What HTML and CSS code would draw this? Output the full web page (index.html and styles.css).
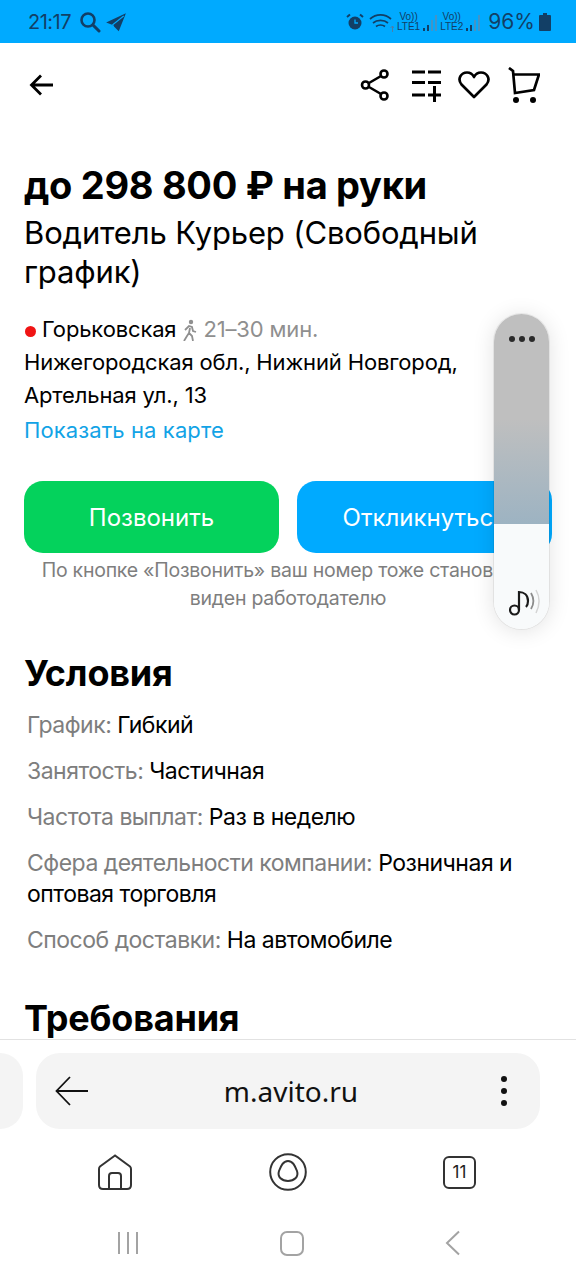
FILE: index.html
```html
<!DOCTYPE html>
<html lang="ru">
<head>
<meta charset="UTF-8">
<title>Водитель Курьер</title>
<link rel="stylesheet" href="styles.css">
</head>
<body>
<div id="wrapper">
	<div class="status-bar">
		<div class="status-left">
			<span class="status-time">21:17</span>
			<svg class="ic-search" width="22" height="22" viewBox="0 0 22 22"><circle cx="9" cy="9" r="6.500" fill="none" stroke="#123f66" stroke-width="2.600"/><path d="M14 14l6 6" stroke="#123f66" stroke-width="3" stroke-linecap="round"/></svg>
			<svg class="ic-tg" width="22" height="22" viewBox="0 0 20 20"><path d="M19 2L1 10.500l5.500 2 1 1 5 5z" fill="#123f66"/><path d="M17 4.500L7 12.500l1 3" fill="none" stroke="#00aaff" stroke-width="1"/></svg>
		</div>
		<div class="status-right">
			<svg width="18" height="18" viewBox="0 0 18 18"><circle cx="9" cy="10" r="6.500" fill="#123f66"/><path d="M9 6.500V10h3" fill="none" stroke="#00aaff" stroke-width="1.300"/><path d="M1 4l3-2.500M17 4l-3-2.500" stroke="#123f66" stroke-width="2"/></svg>
			<svg class="ic-wifi" width="25" height="22" viewBox="0 0 25 22"><path d="M1 8c6-5.500 15-5.500 21 0M4 12c4-3.500 11-3.500 15 0M7 15.500c2.500-2 6.500-2 9 0" fill="none" stroke="#123f66" stroke-width="1.700"/><path d="M23.500 21v-6M21.500 17l2-2 1.500 2" fill="none" stroke="#4d7ea6" stroke-width="1"/></svg>
			<span class="sim"><span>Vo))</span><span>LTE1</span></span>
			<svg width="15" height="20" viewBox="0 0 15 20"><path d="M2 19v-3M6 19v-6" stroke="#123f66" stroke-width="2"/><path d="M10 19V8M14 19V3" stroke="#5a8db5" stroke-width="1.500"/></svg>
			<span class="sim"><span>Vo))</span><span>LTE2</span></span>
			<svg width="15" height="20" viewBox="0 0 15 20"><path d="M2 19v-3M6 19v-6" stroke="#123f66" stroke-width="2"/><path d="M10 19V8M14 19V3" stroke="#5a8db5" stroke-width="1.500"/></svg>
			<span class="status-pct">96%</span>
			<svg width="12" height="18" viewBox="0 0 12 18"><path d="M4 0h4v2h3a1 1 0 011 1v14a1 1 0 01-1 1H1a1 1 0 01-1-1V3a1 1 0 011-1h3z" fill="#123f66"/></svg>
		</div>
	</div>

	<div class="content">
		<div class="top-nav">
			<svg width="28" height="28" viewBox="0 0 28 28"><path d="M25 14H4M13 4.500L3.500 14l9.500 9.500" fill="none" stroke="#000" stroke-width="2.800"/></svg>
			<div class="top-actions">
				<svg class="act-share" width="30" height="34" viewBox="0 0 30 34"><g fill="none" stroke="#000" stroke-width="2.600"><circle cx="5.500" cy="17" r="3.500"/><circle cx="24" cy="6" r="3.500"/><circle cx="24" cy="28" r="3.500"/><path d="M9 15L21 8M9 19l12 7"/></g></svg>
				<svg class="act-compare" width="30" height="33" viewBox="0 0 30 33"><path d="M0 3h13M16 3h13M0 13.500h13M16 13.500h13M0 26h13M16 26h13M22.500 17v16" fill="none" stroke="#000" stroke-width="3"/></svg>
				<svg class="act-heart" width="32" height="30" viewBox="0 0 32 30"><path d="M16 27L3.500 14.500C-1 9 3 2.500 9 2.500c3 0 5.500 1.500 7 4.500 1.500-3 4-4.500 7-4.500 6 0 10 6.500 5.500 12z" fill="none" stroke="#000" stroke-width="2.700" stroke-linejoin="round"/></svg>
				<svg class="act-cart" width="32" height="37" viewBox="0 0 32 37"><path d="M1 1l4 3 2 22 19-3 5-15.500H5.500" fill="none" stroke="#000" stroke-width="2.700"/><circle cx="8" cy="33" r="3" fill="#000"/><circle cx="25" cy="33" r="3" fill="#000"/></svg>
			</div>
		</div>

		<h1 class="price">до 298 800 ₽ на руки</h1>
		<h2 class="job-title">Водитель Курьер (Свободный график)</h2>

		<div class="address">
			<div class="metro">
				<span class="metro-dot"></span>
				<span>Горьковская</span>
				<svg width="16" height="22" viewBox="0 0 16 22"><circle cx="9" cy="3" r="2.200" fill="#8f8f8f"/><path d="M3 11l4-4 3 1 1 4 3 1M8 9l-1 5 3 3 1 5M7 14l-2 3-3 5" fill="none" stroke="#8f8f8f" stroke-width="1.800"/></svg>
				<span class="metro-time">21–30 мин.</span>
			</div>
			<div>Нижегородская обл., Нижний Новгород,</div>
			<div>Артельная ул., 13</div>
			<a class="map-link">Показать на карте</a>
		</div>

		<div class="buttons">
			<div class="btn btn-call">Позвонить</div>
			<div class="btn btn-reply">Откликнуться</div>
		</div>
		<p class="btn-note">По кнопке «Позвонить» ваш номер тоже становится<br>виден работодателю</p>

		<h3 class="section-title">Условия</h3>
		<ul class="params">
			<li><span>График:</span> Гибкий</li>
			<li><span>Занятость:</span> Частичная</li>
			<li><span>Частота выплат:</span> Раз в неделю</li>
			<li><span>Сфера деятельности компании:</span> Розничная и оптовая торговля</li>
			<li><span>Способ доставки:</span> На автомобиле</li>
		</ul>
		<h3 class="section-title section-req">Требования</h3>
	</div>

	<div class="browser-bar">
		<div class="url-row">
			<div class="prev-tab"></div>
			<div class="url-box">
				<svg width="34" height="30" viewBox="0 0 34 30"><path d="M33 15H2M15 1L1.500 15 15 29" fill="none" stroke="#111" stroke-width="1.800"/></svg>
				<span class="url-text">m.avito.ru</span>
				<svg width="8" height="32" viewBox="0 0 8 32"><circle cx="4" cy="4" r="3" fill="#111"/><circle cx="4" cy="16" r="3" fill="#111"/><circle cx="4" cy="28" r="3" fill="#111"/></svg>
			</div>
		</div>
		<div class="browser-tabs">
			<svg width="34" height="36" viewBox="0 0 34 36"><path d="M17 1.500L2 12.500c-.7.600-1 1.300-1 2.500v16c0 2.500 1.500 4 4 4h24c2.500 0 4-1.500 4-4V15c0-1.200-.3-1.900-1-2.500z" fill="none" stroke="#333" stroke-width="2"/><path d="M11 35V22c0-2 1-3 3-3h6c2 0 3 1 3 3v13" fill="none" stroke="#333" stroke-width="2"/></svg>
			<svg width="38" height="38" viewBox="0 0 38 38"><circle cx="19" cy="19" r="17.800" fill="none" stroke="#333" stroke-width="2"/><path d="M19 8c5 0 7 5 9 10 2 6-3 10-9 10S8 24 10 18c2-5 4-10 9-10z" fill="none" stroke="#333" stroke-width="2"/></svg>
			<span class="tab-count">11</span>
		</div>
		<div class="system-nav">
			<svg width="22" height="24" viewBox="0 0 22 24"><path d="M2 1v22M11 1v22M20 1v22" stroke="#a3a3a3" stroke-width="2"/></svg>
			<span class="sys-home"></span>
			<svg width="16" height="26" viewBox="0 0 16 26"><path d="M14 1.500L2 13l12 11.500" fill="none" stroke="#a3a3a3" stroke-width="2"/></svg>
		</div>
	</div>

	<div class="volume">
		<div class="volume-top">
			<span></span><span></span><span></span>
		</div>
		<div class="volume-bottom">
			<svg width="34" height="28" viewBox="0 0 34 28"><circle cx="6.500" cy="21" r="4.500" fill="none" stroke="#1a1a1a" stroke-width="2.200"/><path d="M11 21V3c5 0 9 3 9 9 0 3-1 5-2 6" fill="none" stroke="#1a1a1a" stroke-width="2.200"/><path d="M23 4c3 5 3 11 0 16" fill="none" stroke="#8c8c8c" stroke-width="1.800"/><path d="M28 1c4 7 4 15 0 23" fill="none" stroke="#d4d4d4" stroke-width="1.500"/></svg>
		</div>
	</div>
</div>
</body>
</html>
```

FILE: styles.css
```css
*{
	box-sizing:border-box;
}
html, body{
	margin:0;
	padding:0;
	background:#fff;
}
body{
	font-family:Inter, "Noto Sans", sans-serif;
	color:#000;
}
#wrapper{
	width:576px;
	height:1280px;
	position:relative;
	overflow:hidden;
	display:flex;
	flex-direction:column;
}

/* status bar */
.status-bar{
	height:43px;
	flex:none;
	background:#00aaff;
	color:#123f66;
	display:flex;
	justify-content:space-between;
	align-items:center;
	padding:0 28px;
}
.status-left, .status-right{
	display:flex;
	align-items:center;
}
.status-time{
	font-size:20px;
	font-weight:400;
	letter-spacing:-0.5px;
	margin-right:8px;
}
.ic-search{
	margin-right:4px;
}
.status-right{
	gap:2px;
	margin-right:-3px;
}
.ic-wifi{
	margin-left:3px;
}
.sim{
	display:flex;
	flex-direction:column;
	align-items:center;
	font-size:10px;
	line-height:10px;
	font-family:"Liberation Sans", sans-serif;
	margin-left:1px;
}
.status-pct{
	font-size:21px;
	margin:0 2px 0 6px;
}

/* main content */
.content{
	flex:1;
	overflow:hidden;
	padding:0 24px;
}
.top-nav{
	display:flex;
	justify-content:space-between;
	align-items:center;
	height:84px;
	margin-right:12px;
	margin-left:4px;
}
.top-actions{
	display:flex;
	align-items:center;
	gap:17px;
}
.act-compare{
	margin-left:5px;
}
.act-heart{
	margin-left:-1px;
}
.act-cart{
	margin-left:1px;
}
.price{
	font-size:38px;
	font-weight:700;
	line-height:46px;
	letter-spacing:-0.3px;
	margin:35px 0 0 0;
}
.job-title{
	font-size:31px;
	font-weight:400;
	line-height:39px;
	letter-spacing:-0.15px;
	margin:5px 0 0 0;
	width:480px;
}
.address{
	font-size:22px;
	line-height:33px;
	letter-spacing:-0.15px;
	margin-top:22px;
}
.metro{
	display:flex;
	align-items:center;
	gap:6px;
}
.metro-dot{
	width:11px;
	height:11px;
	border-radius:50%;
	background:#f01414;
	margin:3px 0 0 1px;
}
.metro-time{
	color:#8f8f8f;
	margin-left:-1px;
}
.map-link{
	color:#12a3e6;
	display:block;
	letter-spacing:0.1px;
	margin-top:2px;
}
.buttons{
	display:flex;
	gap:18px;
	margin-top:34px;
}
.btn{
	width:255px;
	height:72px;
	border-radius:19px;
	color:#fff;
	font-size:24px;
	display:flex;
	align-items:center;
	justify-content:center;
	flex:none;
}
.btn-call{
	background:#04d25c;
}
.btn-reply{
	background:#00aaff;
}
.btn-note{
	font-size:19.500px;
	line-height:28px;
	color:#7e7e7e;
	text-align:center;
	letter-spacing:-0.25px;
	margin:3px -24px 0 -24px;
	white-space:nowrap;
}
.section-title{
	font-size:36px;
	font-weight:700;
	line-height:44px;
	letter-spacing:-0.2px;
	margin:39px 0 0 0;
}
.params{
	list-style:none;
	margin:15px 0 0 3px;
	padding:0;
	font-size:23px;
	line-height:31px;
	letter-spacing:-0.5px;
}
.params li{
	margin-bottom:15px;
}
.params span{
	color:#7e7e7e;
}
.section-req{
	margin-top:40px;
}

/* browser bottom bar */
.browser-bar{
	height:241px;
	flex:none;
	background:#fff;
	border-top:1px solid #e2e2e2;
}
.url-row{
	display:flex;
	gap:13px;
	margin-top:13px;
}
.prev-tab{
	width:23px;
	height:76px;
	background:#f4f4f4;
	border-radius:0 24px 24px 0;
}
.url-box{
	width:504px;
	height:76px;
	background:#f4f4f4;
	border-radius:24px;
	display:flex;
	align-items:center;
	justify-content:space-between;
	padding:0 32px 0 19px;
}
.url-text{
	font-size:28px;
	color:#111;
	font-family:"Noto Sans", sans-serif;
	margin-right:7px;
}
.browser-tabs{
	display:flex;
	align-items:center;
	justify-content:space-between;
	height:38px;
	padding:0 100px 0 98px;
	margin-top:24px;
}
.tab-count{
	width:33px;
	height:33px;
	border:2px solid #333;
	border-radius:6px;
	font-size:17px;
	display:flex;
	align-items:center;
	justify-content:center;
	font-family:Inter, sans-serif;
	color:#222;
}
.system-nav{
	display:flex;
	align-items:center;
	justify-content:space-between;
	height:26px;
	padding:0 115px 0 117px;
	margin-top:39px;
}
.sys-home{
	width:24px;
	height:25px;
	border:2.500px solid #a3a3a3;
	border-radius:7px;
}

/* volume overlay */
.volume{
	position:absolute;
	left:494px;
	top:314px;
	width:55px;
	height:315px;
	border-radius:28px;
	overflow:hidden;
	box-shadow:0 2px 22px rgba(0,0,0,0.12), 0 0 0 1px rgba(0,0,0,0.06);
	display:flex;
	flex-direction:column;
}
.volume-top{
	height:210px;
	flex:none;
	background:linear-gradient(#bfbfbf 0, #bfbfbf 50%, #9db3c2 100%);
	display:flex;
	justify-content:center;
	gap:4px;
	padding-top:22px;
}
.volume-top span{
	width:6px;
	height:6px;
	border-radius:50%;
	background:#2a2a2a;
}
.volume-bottom{
	flex:1;
	background:#f8fafb;
	display:flex;
	align-items:flex-end;
	justify-content:center;
	padding:0 0 12px 6px;
}
```
